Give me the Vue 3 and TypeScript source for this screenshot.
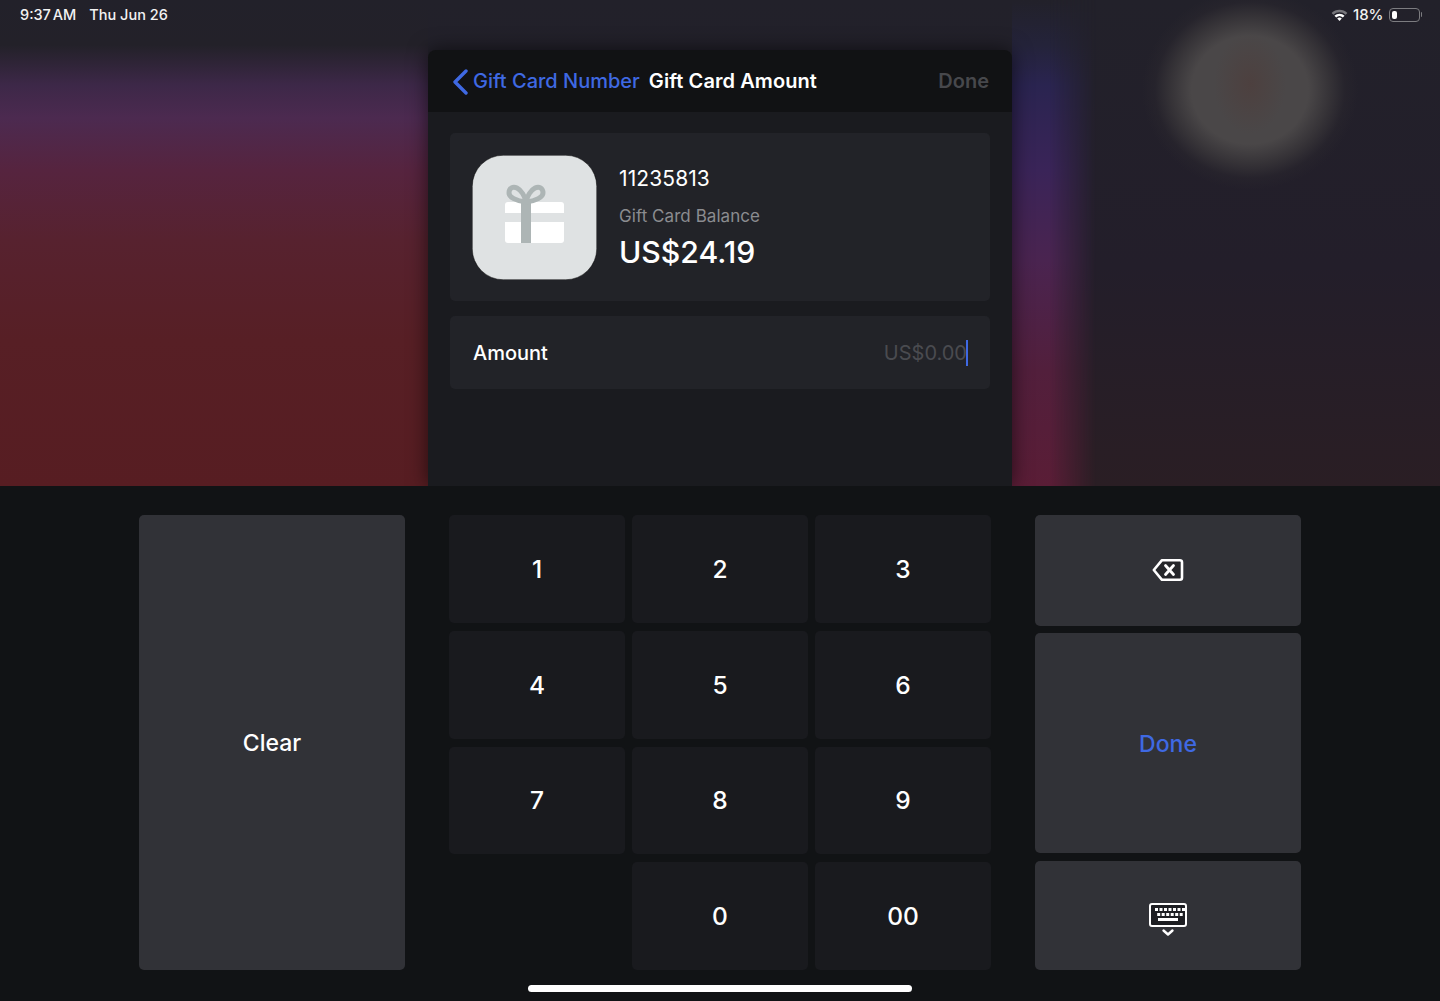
<script setup lang="ts">
const digits: string[] = ['1', '2', '3', '4', '5', '6', '7', '8', '9', '', '0', '00']
</script>

<template>
  <div class="screen">
    <div class="wallpaper">
      <div class="status-bar">
        <div class="status-left">
          <span class="time">9:37 AM</span>
          <span>Thu Jun 26</span>
        </div>
        <div class="status-right">
          <svg class="wifi" width="17" height="12" viewBox="0 0 17 12">
            <path d="M0.6 3.9 A11.4 11.4 0 0 1 16.4 3.9 L14.6 5.8 A8.8 8.8 0 0 0 2.4 5.8 Z" fill="#77777c" />
            <path d="M3.4 6.8 A7.3 7.3 0 0 1 13.6 6.8 L11.8 8.6 A4.8 4.8 0 0 0 5.2 8.6 Z" fill="#fff" />
            <path d="M6.2 9.5 A3.3 3.3 0 0 1 10.8 9.5 L8.5 11.9 Z" fill="#fff" />
          </svg>
          <span>18%</span>
          <div class="battery"><div class="battery-level"></div></div>
          <div class="battery-nub"></div>
        </div>
      </div>

      <div class="sheet">
        <div class="sheet-header">
          <svg class="chevron" width="16" height="26" viewBox="0 0 16 26">
            <path d="M14 2 L3 13 L14 24" fill="none" stroke="#3f69e3" stroke-width="3.4" stroke-linecap="round" stroke-linejoin="round" />
          </svg>
          <span class="back-label">Gift Card Number</span>
          <span class="sheet-title">Gift Card Amount</span>
          <span class="header-done">Done</span>
        </div>

        <div class="sheet-body">
          <div class="card balance-card">
            <svg class="gift" width="125" height="125" viewBox="0 0 125 125">
              <rect x="0.25" y="0.25" width="124.5" height="124.5" rx="31" fill="#dfe2e3" stroke="#000" stroke-width="0.5" />
              <rect x="33" y="47" width="59" height="41" rx="3" fill="#fff" />
              <rect x="33" y="58" width="59" height="9" fill="#dfe2e3" />
              <rect x="49" y="47" width="10" height="41" fill="#adb5b5" />
              <path d="M54 47 C44 46 37 42 37 38 C37 33 41 31 45 33 C49 35 53 41 54 47 C55 41 59 35 63 33 C67 31 71 33 71 38 C71 42 64 46 54 47 Z" fill="none" stroke="#adb5b5" stroke-width="5" stroke-linejoin="round" />
            </svg>
            <div class="balance-text">
              <div class="card-number">11235813</div>
              <div class="balance-label">Gift Card Balance</div>
              <div class="balance-value">US$24.19</div>
            </div>
          </div>

          <div class="card amount-card">
            <span class="amount-label">Amount</span>
            <span class="amount-input">US$0.00<i class="caret"></i></span>
          </div>
        </div>
      </div>
    </div>

    <div class="keyboard">
      <button class="key side-key text-key">Clear</button>

      <div class="digit-pad">
        <template v-for="(digit, i) in digits" :key="i">
          <button v-if="digit" class="key digit-key">{{ digit }}</button>
          <div v-else></div>
        </template>
      </div>

      <div class="side-column">
        <button class="key side-key">
          <svg class="backspace-icon" width="32" height="24" viewBox="0 0 32 24">
            <path d="M10 2.2 H28 A2 2 0 0 1 30 4.2 V19.8 A2 2 0 0 1 28 21.8 H10 L1.8 12 Z" fill="#26272b" stroke="#fff" stroke-width="2.6" stroke-linejoin="round" />
            <path d="M13.5 7.5 L21.5 16.5 M21.5 7.5 L13.5 16.5" stroke="#fff" stroke-width="2.8" stroke-linecap="round" />
          </svg>
        </button>
        <button class="key side-key text-key done-key">Done</button>
        <button class="key side-key hide-key">
          <svg class="keyboard-icon" width="38" height="34" viewBox="0 0 38 34">
            <rect x="1" y="1" width="36" height="22" rx="2" fill="#1d1e22" stroke="#fff" stroke-width="2" />
            <g fill="#fff">
              <rect v-for="n in 7" :key="'a' + n" :x="1.5 + n * 4.5" y="5" width="3" height="3" />
              <rect v-for="n in 6" :key="'b' + n" :x="3.7 + n * 4.5" y="10" width="3" height="3" />
              <rect x="9" y="15" width="20" height="3" />
            </g>
            <path d="M14.5 27.5 L19 31.5 L23.5 27.5" fill="none" stroke="#fff" stroke-width="2.4" stroke-linecap="round" stroke-linejoin="round" />
          </svg>
        </button>
      </div>

      <div class="home-indicator"></div>
    </div>
  </div>
</template>

<style>
html,
body {
  margin: 0;
  background: #111315;
}
</style>

<style scoped>
.screen {
  width: 1440px;
  height: 1001px;
  overflow: hidden;
  display: flex;
  flex-direction: column;
  font-family: Inter, "Liberation Sans", sans-serif;
  color: #fff;
}

.wallpaper {
  position: relative;
  isolation: isolate;
  height: 486px;
  flex: none;
  display: flex;
  flex-direction: column;
  background:
    radial-gradient(ellipse 36px 50px at 1250px 84px, rgba(78, 62, 60, 0.75), rgba(74, 70, 70, 0) 100%) no-repeat,
    radial-gradient(ellipse 108px 100px at 1250px 90px, #4a4748 0%, #4a4748 54%, rgba(58, 55, 58, 0.8) 74%, rgba(42, 39, 46, 0.5) 88%, rgba(36, 32, 42, 0) 100%) no-repeat,
    linear-gradient(180deg, #22212a 0%, #232129 45px, #3d2848 85px, #4c2a50 118px, #56243f 170px, #57222f 240px, #571f25 340px, #571d22 100%) 0 0 / 428px 100% no-repeat,
    linear-gradient(180deg, #22212a 0%, #231e2a 55%, #2a1e24 100%);
}

/* blurred coloured strip to the right of the sheet */
.wallpaper::before {
  content: "";
  position: absolute;
  z-index: -1;
  top: 0;
  bottom: 0;
  left: 1012px;
  width: 84px;
  background: linear-gradient(180deg, #22212a 0%, #24233a 45px, #2a2450 85px, #3a2458 170px, #4a2450 260px, #521f3c 370px, #5a1d36 100%);
  -webkit-mask-image: linear-gradient(90deg, #000 45%, transparent 100%);
  mask-image: linear-gradient(90deg, #000 45%, transparent 100%);
}

.status-bar {
  height: 29px;
  flex: none;
  padding: 0 18px 0 20px;
  display: flex;
  align-items: center;
  justify-content: space-between;
  font-size: 14.5px;
  font-weight: 500;
  color: #f2f2f2;
}

.status-left {
  display: flex;
  gap: 13px;
}

.time {
  word-spacing: -2px;
}

.status-right {
  display: flex;
  align-items: center;
  font-size: 15px;
}

.wifi {
  margin-right: 5px;
}

.battery {
  width: 31px;
  height: 14px;
  margin-left: 5px;
  box-sizing: border-box;
  padding: 2px;
  border: 1px solid #7c7c80;
  border-radius: 4px;
}

.battery-level {
  width: 5px;
  height: 100%;
  background: #fff;
  border-radius: 2px;
}

.battery-nub {
  width: 1.5px;
  height: 5px;
  margin-left: 1px;
  background: #7c7c80;
  border-radius: 0 2px 2px 0;
}

.sheet {
  width: 584px;
  flex: 1;
  margin: 21px auto 0;
  background: #1a1b1f;
  border-radius: 8px 8px 0 0;
  box-shadow: 0 0 20px rgba(0, 0, 0, 0.6);
  overflow: hidden;
}

.sheet-header {
  height: 62px;
  box-sizing: border-box;
  padding: 0 23px 0 24px;
  display: flex;
  align-items: center;
  background: #111214;
  font-size: 20px;
}

.chevron {
  margin-right: 5px;
  margin-top: 1px;
}

.back-label {
  color: #3f69e3;
  font-weight: 500;
}

.sheet-title {
  margin-left: 9px;
  font-weight: 600;
  letter-spacing: 0.08px;
}

.header-done {
  margin-left: auto;
  font-weight: 600;
  color: #47484c;
}

.sheet-body {
  padding: 21px 22px 0;
  display: flex;
  flex-direction: column;
  gap: 15px;
}

.card {
  background: #222328;
  border-radius: 5px;
  display: flex;
  align-items: center;
}

.balance-card {
  height: 168px;
  padding: 0 22px;
  gap: 22px;
}

.gift {
  flex: none;
}

.balance-text {
  padding-top: 3px;
  display: flex;
  flex-direction: column;
}

.card-number {
  font-size: 21px;
  line-height: 26px;
  letter-spacing: 0.1px;
}

.balance-label {
  margin-top: 13px;
  font-size: 17px;
  line-height: 22px;
  letter-spacing: 0.05px;
  color: #8b8c90;
}

.balance-value {
  margin-top: 6px;
  font-size: 30.2px;
  line-height: 38px;
  font-weight: 500;
}

.amount-card {
  height: 73px;
  padding: 0 22px 0 23px;
  justify-content: space-between;
  font-size: 20px;
}

.amount-label {
  font-weight: 500;
}

.amount-input {
  display: flex;
  align-items: center;
  color: #4a4b50;
}

.caret {
  width: 2px;
  height: 26px;
  margin-left: -1px;
  background: #3f69e3;
}

.keyboard {
  position: relative;
  flex: 1;
  box-sizing: border-box;
  padding: 29px 139px 31px;
  display: grid;
  grid-template-columns: 266px 542px 266px;
  column-gap: 44px;
  background: #111315;
}

.key {
  margin: 0;
  padding: 0;
  border: 0;
  border-radius: 5px;
  font: inherit;
  font-size: 23px;
  font-weight: 500;
  color: #fff;
  display: flex;
  align-items: center;
  justify-content: center;
}

.side-key {
  background: #313237;
}

.text-key {
  padding-top: 1px;
}

.digit-key {
  font-size: 24.5px;
  background: #191a1e;
}

.done-key {
  color: #3f69e3;
}

.hide-key {
  margin-top: 1px;
}

.backspace-icon {
  margin-bottom: 2px;
}

.keyboard-icon {
  margin-top: 8px;
}

.digit-pad {
  display: grid;
  grid-template-columns: repeat(3, 176px);
  grid-template-rows: repeat(4, 1fr);
  column-gap: 7px;
  row-gap: 8px;
}

.side-column {
  display: grid;
  grid-template-rows: 111px 220px 1fr;
  row-gap: 7px;
}

.home-indicator {
  position: absolute;
  left: 528px;
  bottom: 9px;
  width: 384px;
  height: 7px;
  background: #fff;
  border-radius: 4px;
}
</style>
